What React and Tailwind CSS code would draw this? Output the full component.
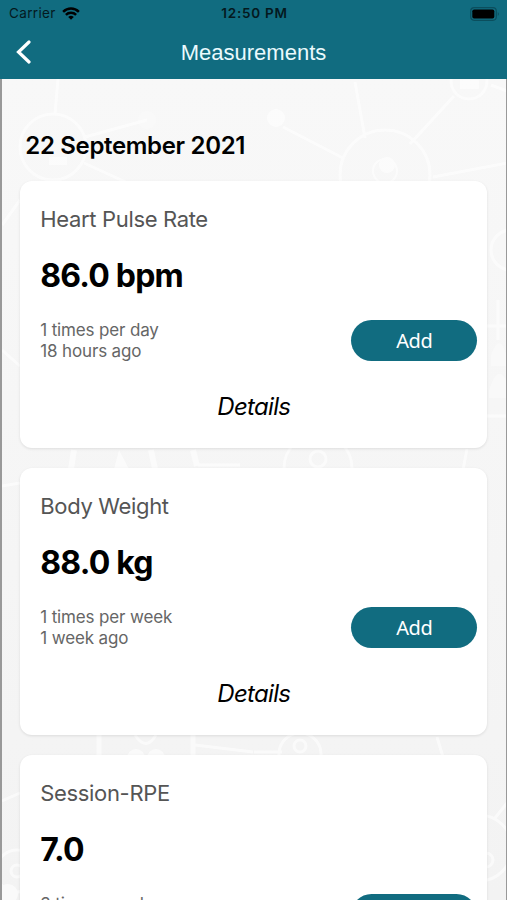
import { clsx } from "clsx";

const measurements = [
  { title: "Heart Pulse Rate", value: "86.0 bpm", frequency: "1 times per day", last: "18 hours ago" },
  { title: "Body Weight", value: "88.0 kg", frequency: "1 times per week", last: "1 week ago" },
  { title: "Session-RPE", value: "7.0", frequency: "3 times per day", last: "1 week ago" },
];

const StatusBar = () => (
  <div className="grid grid-cols-3 items-center h-[27px] pl-[9px] pr-[7px] text-[13.5px] text-[#04191e]">
    <div className="flex items-center gap-[6px]">
      <span className="tracking-[0.35px]">Carrier</span>
      <svg width="18" height="13" viewBox="0 0 19 14" fill="none" stroke="#000" strokeWidth="2.7">
        <path d="M1 5.2C5.8 .5 13.2 .5 18 5.2" />
        <path d="M4 8.4C7 5.5 12 5.5 15 8.4" />
        <path d="M6.5 10.7Q9.5 8 12.5 10.7L9.5 13.7Z" fill="#000" stroke="none" />
      </svg>
    </div>
    <span className="text-center font-semibold tracking-[0.75px] whitespace-nowrap">12:50 PM</span>
    <svg className="justify-self-end" width="30" height="14" viewBox="0 0 30 14">
      <rect x=".7" y=".7" width="25.6" height="12.6" rx="3.5" fill="none" stroke="#0b4e5d" strokeWidth="1.2" />
      <rect x="2.3" y="2.5" width="22" height="9" rx="1.8" fill="#000" />
      <path d="M27.8 5Q30 7 27.8 9Z" fill="#0b4e5d" />
    </svg>
  </div>
);

const Header = () => (
  <header className="shrink-0 h-[79px] bg-[#116c80]">
    <StatusBar />
    <div className="grid grid-cols-[60px_1fr_60px] items-center h-[50px]">
      <button className="pl-[16px]" aria-label="Back">
        <svg width="16" height="24" viewBox="0 0 16 24" fill="none" stroke="#fff" strokeWidth="3.2" strokeLinecap="round" strokeLinejoin="miter">
          <path d="M13 2L2.5 12L13 22" />
        </svg>
      </button>
      <h1 className="text-center text-[22px] text-[#eafafd] font-['Liberation_Sans',sans-serif]">Measurements</h1>
    </div>
  </header>
);

const Backdrop = () => (
  <svg className="absolute inset-0 -z-10 opacity-60" width="507" height="821" viewBox="2 79 507 821" fill="none" stroke="#fff" strokeWidth="3">
    <circle cx="53" cy="147" r="33" />
    <circle cx="147" cy="120" r="9" fill="#fbfbfb" stroke="none" />
    <circle cx="276" cy="118" r="9" fill="#fff" stroke="none" />
    <circle cx="385" cy="175" r="45" />
    <circle cx="385" cy="171" r="12" strokeWidth="2" />
    <circle cx="387" cy="165" r="8" fill="#fff" stroke="none" />
    <circle cx="469" cy="81" r="18" />
    <rect x="460" y="80" width="19" height="9" fill="#fff" stroke="none" />
    <rect x="49" y="157" width="18" height="8" fill="#fff" stroke="none" />
    <path d="M58 79L55 114M85 137L147 120M84 163L130 184M283 127L343 158M355 82L365 138M454 96L410 144M433 177L507 163M491 85L507 91" />
    <path d="M2 225L20 200M2 350L20 366" />
    <circle cx="511" cy="250" r="20" />
    <path d="M487 326H507M487 416H507M498 300V340" />
    <path d="M491 366V355Q500 330 507 357V366M489 390Q498 362 507 382V398H489Z" fill="#fbfbfb" stroke="none" />
    <path d="M74 450L71 469M151 450L155 469M193 450L197 466" strokeWidth="6" />
    <path d="M198 465H240" />
    <path d="M114 469L119 450L129 469Z" fill="#fff" stroke="none" />
    <circle cx="318" cy="468" r="34" />
    <circle cx="318" cy="459" r="8" />
    <path d="M467 449L463 470M2 486L20 483" />
    <path d="M99 735V757M193 735V757" strokeWidth="5" />
    <path d="M135 735Q146 752 156 735M195 745L253 752" />
    <circle cx="136" cy="758" r="9" fill="#fff" stroke="none" />
    <circle cx="156" cy="758" r="9" fill="#fff" stroke="none" />
    <path d="M254 752H282" />
    <circle cx="300" cy="754" r="21" />
    <circle cx="300" cy="746" r="6" />
    <path d="M437 737L443 757M2 801L20 793M495 818L507 803" />
    <circle cx="479" cy="848" r="33" />
    <circle cx="486" cy="860" r="7" />
    <circle cx="17" cy="871" r="21" />
    <circle cx="17" cy="871" r="6" />
    <circle cx="8" cy="894" r="10" fill="#fff" stroke="none" />
  </svg>
);

const MeasurementCard = ({ title, value, frequency, last, className }) => (
  <section
    className={clsx(
      "flex flex-col shrink-0 h-[267px] pt-[25px] pl-[20px] pr-[10px] bg-white rounded-[12px] shadow-[0_1px_3px_rgba(0,0,0,0.1)]",
      className
    )}
  >
    <h3 className="h-[26px] leading-[26px] text-[22px] tracking-[-0.34px] text-[#555]">{title}</h3>
    <p className="mt-[24px] h-[40px] leading-[40px] text-[32px] tracking-[-0.8px] font-bold text-black">{value}</p>
    <div className="mt-[24px] flex items-center justify-between">
      <div className="text-[17px] leading-[20.5px] tracking-[-0.15px] text-[#666]">
        <p>{frequency}</p>
        <p>{last}</p>
      </div>
      <button className="w-[126px] h-[41px] rounded-full bg-[#116c80] text-[20px] tracking-[-0.4px] text-white font-['Noto_Sans',sans-serif]">
        Add
      </button>
    </div>
    <button className="mt-[31px] mr-[10px] self-center h-[30px] leading-[30px] text-[24px] tracking-[-0.7px] italic text-black">
      Details
    </button>
  </section>
);

const App = () => {
  return (
    <div className="flex flex-col w-[507px] h-[900px] overflow-hidden bg-[#f5f5f5] font-['Inter',sans-serif]">
      <Header />
      <main className="relative isolate flex-1 min-h-0 overflow-hidden border-l-2 border-r border-l-[#999] border-r-[#999] bg-linear-to-b from-[#f8f8f8] to-[#f3f3f3] pl-[18.3px] pr-[18.7px]">
        <Backdrop />
        <h2 className="mt-[52px] ml-[5px] h-[30px] leading-[30px] text-[24px] tracking-[-0.33px] font-semibold text-black">
          22 September 2021
        </h2>
        <div className="flex flex-col gap-[19.9px] mt-[20.2px]">
          {measurements.map((item) => (
            <MeasurementCard key={item.title} {...item} />
          ))}
        </div>
      </main>
    </div>
  );
};

export default App;
